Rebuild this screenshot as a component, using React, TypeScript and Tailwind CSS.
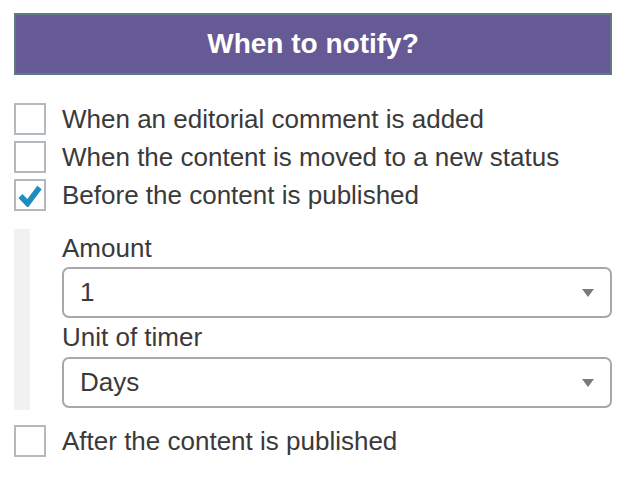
import React from "react";

function Checkbox({ checked }: { checked?: boolean }) {
  return (
    <span className="flex h-[32px] w-[32px] shrink-0 items-center justify-center border-2 border-[#b4b9be] bg-white">
      {checked && (
        <svg width="24" height="22" viewBox="0 0 24 22" className="mt-[2px]">
          <path d="M2.5 11 L9.5 18.5 L21.5 2.5" fill="none" stroke="#1e8cbe" strokeWidth="5.5" strokeLinejoin="miter" />
        </svg>
      )}
    </span>
  );
}

function Row({ label, checked }: { label: string; checked?: boolean }) {
  return (
    <label className="flex h-[32px] items-center gap-[16px]">
      <Checkbox checked={checked} />
      <span className="leading-[32px]">{label}</span>
    </label>
  );
}

function Select({ value }: { value: string }) {
  return (
    <div className="flex h-[51px] items-center justify-between rounded-[7px] border-2 border-[#a8a8a8] bg-white pl-[16px] pr-[16px]">
      <span>{value}</span>
      <svg width="12" height="8" viewBox="0 0 12 8">
        <path d="M0 0 H12 L6 8 Z" fill="#7a7a7a" />
      </svg>
    </div>
  );
}

export default function App() {
  return (
    <div className="w-[626px] bg-white px-[14px] pt-[13px] pb-[24px] text-[26px] text-[#3a3a3a] [font-family:'Liberation_Sans',Arial,sans-serif]">
      <div className="flex h-[62px] items-center justify-center border-2 border-[#5c7a80] bg-[#665a96] text-[28px] font-bold text-white">
        When to notify?
      </div>

      <div className="mt-[28px] flex flex-col gap-[6px]">
        <Row label="When an editorial comment is added" />
        <Row label="When the content is moved to a new status" />
        <Row label="Before the content is published" checked />
      </div>

      <div className="mt-[18px] flex">
        <div className="w-[16px] shrink-0 bg-[#f1f1f1]" />
        <div className="ml-[32px] flex-1 pb-[2px]">
          <div className="leading-[38px]">Amount</div>
          <Select value="1" />
          <div className="leading-[39px]">Unit of timer</div>
          <Select value="Days" />
        </div>
      </div>

      <div className="mt-[15px]">
        <Row label="After the content is published" />
      </div>
    </div>
  );
}
